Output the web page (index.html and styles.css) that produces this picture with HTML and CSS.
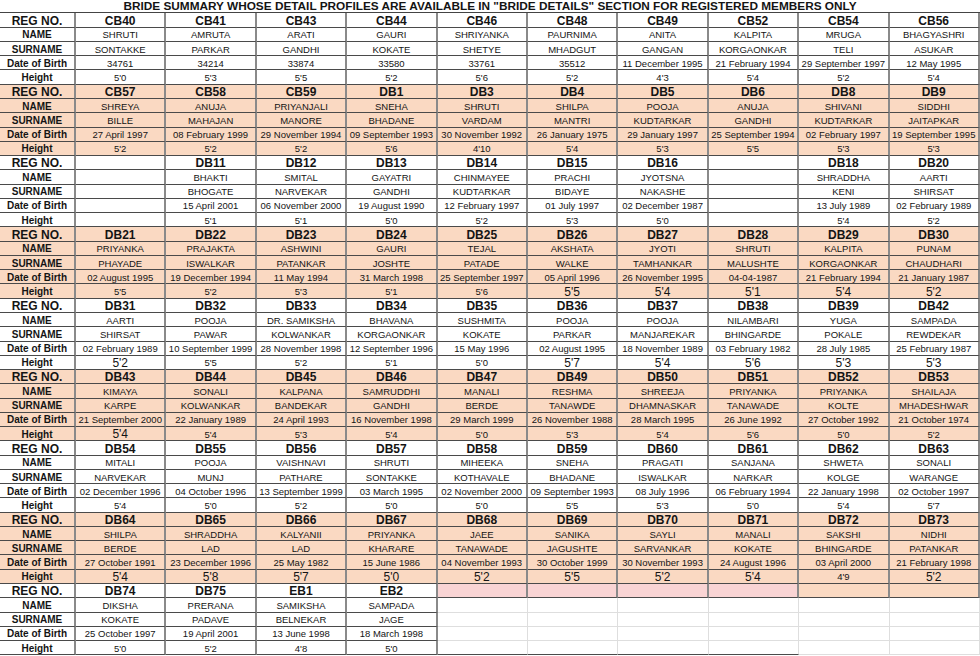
FILE: index.html
```html
<!DOCTYPE html>
<html>
<head>
<meta charset="utf-8">
<title>Bride Summary</title>
<link rel="stylesheet" href="styles.css">
</head>
<body>
<div class="sheet">
  <div class="title">BRIDE SUMMARY WHOSE DETAIL PROFILES ARE AVAILABLE IN "BRIDE DETAILS" SECTION FOR REGISTERED MEMBERS ONLY</div>

  <div class="blk">
    <div>REG NO.</div><div>CB40</div><div>CB41</div><div>CB43</div><div>CB44</div><div>CB46</div><div>CB48</div><div>CB49</div><div>CB52</div><div>CB54</div><div>CB56</div>
    <div>NAME</div><div>SHRUTI</div><div>AMRUTA</div><div>ARATI</div><div>GAURI</div><div>SHRIYANKA</div><div>PAURNIMA</div><div>ANITA</div><div>KALPITA</div><div>MRUGA</div><div>BHAGYASHRI</div>
    <div>SURNAME</div><div>SONTAKKE</div><div>PARKAR</div><div>GANDHI</div><div>KOKATE</div><div>SHETYE</div><div>MHADGUT</div><div>GANGAN</div><div>KORGAONKAR</div><div>TELI</div><div>ASUKAR</div>
    <div>Date of Birth</div><div>34761</div><div>34214</div><div>33874</div><div>33580</div><div>33761</div><div>35512</div><div>11 December 1995</div><div>21 February 1994</div><div>29 September 1997</div><div>12 May 1995</div>
    <div>Height</div><div>5'0</div><div>5'3</div><div>5'5</div><div>5'2</div><div>5'6</div><div>5'2</div><div>4'3</div><div>5'4</div><div>5'2</div><div>5'4</div>
  </div>

  <div class="blk p">
    <div>REG NO.</div><div>CB57</div><div>CB58</div><div>CB59</div><div>DB1</div><div>DB3</div><div>DB4</div><div>DB5</div><div>DB6</div><div>DB8</div><div>DB9</div>
    <div>NAME</div><div>SHREYA</div><div>ANUJA</div><div>PRIYANJALI</div><div>SNEHA</div><div>SHRUTI</div><div>SHILPA</div><div>POOJA</div><div>ANUJA</div><div>SHIVANI</div><div>SIDDHI</div>
    <div>SURNAME</div><div>BILLE</div><div>MAHAJAN</div><div>MANORE</div><div>BHADANE</div><div>VARDAM</div><div>MANTRI</div><div>KUDTARKAR</div><div>GANDHI</div><div>KUDTARKAR</div><div>JAITAPKAR</div>
    <div>Date of Birth</div><div>27 April 1997</div><div>08 February 1999</div><div>29 November 1994</div><div>09 September 1993</div><div>30 November 1992</div><div>26 January 1975</div><div>29 January 1997</div><div>25 September 1994</div><div>02 February 1997</div><div>19 September 1995</div>
    <div>Height</div><div>5'2</div><div>5'2</div><div>5'2</div><div>5'6</div><div>4'10</div><div>5'4</div><div>5'3</div><div>5'5</div><div>5'3</div><div>5'3</div>
  </div>

  <div class="blk">
    <div>REG NO.</div><div></div><div>DB11</div><div>DB12</div><div>DB13</div><div>DB14</div><div>DB15</div><div>DB16</div><div></div><div>DB18</div><div>DB20</div>
    <div>NAME</div><div></div><div>BHAKTI</div><div>SMITAL</div><div>GAYATRI</div><div>CHINMAYEE</div><div>PRACHI</div><div>JYOTSNA</div><div></div><div>SHRADDHA</div><div>AARTI</div>
    <div>SURNAME</div><div></div><div>BHOGATE</div><div>NARVEKAR</div><div>GANDHI</div><div>KUDTARKAR</div><div>BIDAYE</div><div>NAKASHE</div><div></div><div>KENI</div><div>SHIRSAT</div>
    <div>Date of Birth</div><div></div><div>15 April 2001</div><div>06 November 2000</div><div>19 August 1990</div><div>12 February 1997</div><div>01 July 1997</div><div>02 December 1987</div><div></div><div>13 July 1989</div><div>02 February 1989</div>
    <div>Height</div><div></div><div>5'1</div><div>5'1</div><div>5'0</div><div>5'2</div><div>5'3</div><div>5'0</div><div></div><div>5'4</div><div>5'2</div>
  </div>

  <div class="blk p">
    <div>REG NO.</div><div>DB21</div><div>DB22</div><div>DB23</div><div>DB24</div><div>DB25</div><div>DB26</div><div>DB27</div><div>DB28</div><div>DB29</div><div>DB30</div>
    <div>NAME</div><div>PRIYANKA</div><div>PRAJAKTA</div><div>ASHWINI</div><div>GAURI</div><div>TEJAL</div><div>AKSHATA</div><div>JYOTI</div><div>SHRUTI</div><div>KALPITA</div><div>PUNAM</div>
    <div>SURNAME</div><div>PHAYADE</div><div>ISWALKAR</div><div>PATANKAR</div><div>JOSHTE</div><div>PATADE</div><div>WALKE</div><div>TAMHANKAR</div><div>MALUSHTE</div><div>KORGAONKAR</div><div>CHAUDHARI</div>
    <div>Date of Birth</div><div>02 August 1995</div><div>19 December 1994</div><div>11 May 1994</div><div>31 March 1998</div><div>25 September 1997</div><div>05 April 1996</div><div>26 November 1995</div><div>04-04-1987</div><div>21 February 1994</div><div>21 January 1987</div>
    <div>Height</div><div>5'5</div><div>5'2</div><div>5'3</div><div>5'1</div><div>5'6</div><div class="b">5'5</div><div class="b">5'4</div><div class="b">5'1</div><div class="b">5'4</div><div class="b">5'2</div>
  </div>

  <div class="blk">
    <div>REG NO.</div><div>DB31</div><div>DB32</div><div>DB33</div><div>DB34</div><div>DB35</div><div>DB36</div><div>DB37</div><div>DB38</div><div>DB39</div><div>DB42</div>
    <div>NAME</div><div>AARTI</div><div>POOJA</div><div>DR. SAMIKSHA</div><div>BHAVANA</div><div>SUSHMITA</div><div>POOJA</div><div>POOJA</div><div>NILAMBARI</div><div>YUGA</div><div>SAMPADA</div>
    <div>SURNAME</div><div>SHIRSAT</div><div>PAWAR</div><div>KOLWANKAR</div><div>KORGAONKAR</div><div>KOKATE</div><div>PARKAR</div><div>MANJAREKAR</div><div>BHINGARDE</div><div>POKALE</div><div>REWDEKAR</div>
    <div>Date of Birth</div><div>02 February 1989</div><div>10 September 1999</div><div>28 November 1998</div><div>12 September 1996</div><div>15 May 1996</div><div>02 August 1995</div><div>18 November 1989</div><div>03 February 1982</div><div>28 July 1985</div><div>25 February 1987</div>
    <div>Height</div><div class="b">5'2</div><div>5'5</div><div>5'2</div><div>5'1</div><div>5'0</div><div class="b">5'7</div><div class="b">5'4</div><div class="b">5'6</div><div class="b">5'3</div><div class="b">5'3</div>
  </div>

  <div class="blk p">
    <div>REG NO.</div><div>DB43</div><div>DB44</div><div>DB45</div><div>DB46</div><div>DB47</div><div>DB49</div><div>DB50</div><div>DB51</div><div>DB52</div><div>DB53</div>
    <div>NAME</div><div>KIMAYA</div><div>SONALI</div><div>KALPANA</div><div>SAMRUDDHI</div><div>MANALI</div><div>RESHMA</div><div>SHREEJA</div><div>PRIYANKA</div><div>PRIYANKA</div><div>SHAILAJA</div>
    <div>SURNAME</div><div>KARPE</div><div>KOLWANKAR</div><div>BANDEKAR</div><div>GANDHI</div><div>BERDE</div><div>TANAWDE</div><div>DHAMNASKAR</div><div>TANAWADE</div><div>KOLTE</div><div>MHADESHWAR</div>
    <div>Date of Birth</div><div>21 September 2000</div><div>22 January 1989</div><div>24 April 1993</div><div>16 November 1998</div><div>29 March 1999</div><div>26 November 1988</div><div>28 March 1995</div><div>26 June 1992</div><div>27 October 1992</div><div>21 October 1974</div>
    <div>Height</div><div class="b">5'4</div><div>5'4</div><div>5'3</div><div>5'4</div><div>5'0</div><div>5'3</div><div>5'4</div><div>5'6</div><div>5'0</div><div>5'2</div>
  </div>

  <div class="blk">
    <div>REG NO.</div><div>DB54</div><div>DB55</div><div>DB56</div><div>DB57</div><div>DB58</div><div>DB59</div><div>DB60</div><div>DB61</div><div>DB62</div><div>DB63</div>
    <div>NAME</div><div>MITALI</div><div>POOJA</div><div>VAISHNAVI</div><div>SHRUTI</div><div>MIHEEKA</div><div>SNEHA</div><div>PRAGATI</div><div>SANJANA</div><div>SHWETA</div><div>SONALI</div>
    <div>SURNAME</div><div>NARVEKAR</div><div>MUNJ</div><div>PATHARE</div><div>SONTAKKE</div><div>KOTHAVALE</div><div>BHADANE</div><div>ISWALKAR</div><div>NARKAR</div><div>KOLGE</div><div>WARANGE</div>
    <div>Date of Birth</div><div>02 December 1996</div><div>04 October 1996</div><div>13 September 1999</div><div>03 March 1995</div><div>02 November 2000</div><div>09 September 1993</div><div>08 July 1996</div><div>06 February 1994</div><div>22 January 1998</div><div>02 October 1997</div>
    <div>Height</div><div>5'4</div><div>5'0</div><div>5'2</div><div>5'0</div><div>5'0</div><div>5'5</div><div>5'3</div><div>5'0</div><div>5'4</div><div>5'7</div>
  </div>

  <div class="blk p">
    <div>REG NO.</div><div>DB64</div><div>DB65</div><div>DB66</div><div>DB67</div><div>DB68</div><div>DB69</div><div>DB70</div><div>DB71</div><div>DB72</div><div>DB73</div>
    <div>NAME</div><div>SHILPA</div><div>SHRADDHA</div><div>KALYANII</div><div>PRIYANKA</div><div>JAEE</div><div>SANIKA</div><div>SAYLI</div><div>MANALI</div><div>SAKSHI</div><div>NIDHI</div>
    <div>SURNAME</div><div>BERDE</div><div>LAD</div><div>LAD</div><div>KHARARE</div><div>TANAWADE</div><div>JAGUSHTE</div><div>SARVANKAR</div><div>KOKATE</div><div>BHINGARDE</div><div>PATANKAR</div>
    <div>Date of Birth</div><div>27 October 1991</div><div>23 December 1996</div><div>25 May 1982</div><div>15 June 1986</div><div>04 November 1993</div><div>30 October 1999</div><div>30 November 1993</div><div>24 August 1996</div><div>03 April 2000</div><div>21 February 1998</div>
    <div>Height</div><div class="b">5'4</div><div class="b">5'8</div><div class="b">5'7</div><div class="b">5'0</div><div class="b">5'2</div><div class="b">5'5</div><div class="b">5'2</div><div class="b">5'4</div><div>4'9</div><div class="b">5'2</div>
  </div>

  <div class="blk last">
    <div>REG NO.</div><div>DB74</div><div>DB75</div><div>EB1</div><div>EB2</div><div class="k"></div><div class="k"></div><div class="k"></div><div class="k"></div><div class="pc"></div><div class="pc"></div>
    <div>NAME</div><div>DIKSHA</div><div>PRERANA</div><div>SAMIKSHA</div><div>SAMPADA</div><div class="e"></div><div class="e"></div><div class="e"></div><div class="e"></div><div class="e"></div><div class="e"></div>
    <div>SURNAME</div><div>KOKATE</div><div>PADAVE</div><div>BELNEKAR</div><div>JAGE</div><div class="e"></div><div class="e"></div><div class="e"></div><div class="e"></div><div class="e"></div><div class="e"></div>
    <div>Date of Birth</div><div>25 October 1997</div><div>19 April 2001</div><div>13 June 1998</div><div>18 March 1998</div><div class="e"></div><div class="e"></div><div class="e"></div><div class="e"></div><div class="e"></div><div class="e"></div>
    <div>Height</div><div>5'0</div><div>5'2</div><div>4'8</div><div>5'0</div><div class="e eb"></div><div class="e eb"></div><div class="e eb"></div><div class="e eb"></div><div class="e"></div><div class="e"></div>
  </div>
</div>
</body>
</html>
```

FILE: styles.css
```css
* { box-sizing: border-box; }

html, body {
  margin: 0;
  padding: 0;
  background: #ffffff;
}

body {
  font-family: "Liberation Sans", Arial, sans-serif;
  color: #141414;
  width: 980px;
  height: 656px;
  overflow: hidden;
}

.sheet {
  width: 1000px;
}

.title {
  height: 13.4px;
  width: 980px;
  font-size: 11.8px;
  font-weight: bold;
  line-height: 13px;
  text-align: center;
  border-bottom: 1px solid #444;
  white-space: nowrap;
}

.blk {
  display: grid;
  grid-template-columns: 76px repeat(10, 90.4px);
  grid-template-rows: repeat(5, 14.28px);
  background: #ffffff;
}

.blk.p {
  background: #fad9c2;
}

.blk > div {
  display: flex;
  align-items: center;
  justify-content: center;
  white-space: nowrap;
  overflow: hidden;
  font-size: 9.5px;
  border-right: 2px solid #8a8a8a;
  border-bottom: 1px solid #4a4a4a;
  padding-top: 1px;
}

/* label column */
.blk > div:nth-child(11n+1) {
  font-size: 10px;
  font-weight: bold;
}

/* reg number row */
.blk > div:nth-child(-n+11) {
  font-size: 12px;
  font-weight: bold;
}

.blk > div.b {
  font-size: 12px;
}

.blk > div.k {
  background: #f9d4d4;
}

.blk > div.pc {
  background: #fad9c2;
}

.blk > div.e {
  border-right: 1px solid #dedede;
  border-bottom-color: #dedede;
}

.blk > div.e.eb {
  border-bottom-color: #4a4a4a;
}
```
